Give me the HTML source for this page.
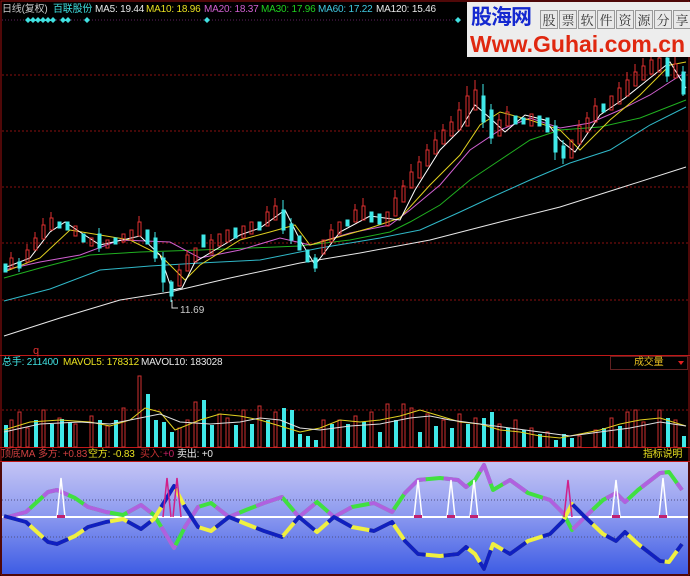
<!DOCTYPE html>
<html><head><meta charset="utf-8">
<style>
html,body{margin:0;padding:0;background:#000;}
body{width:690px;height:576px;overflow:hidden;position:relative;font-family:"Liberation Sans","Noto Sans CJK SC",sans-serif;}
.t{position:absolute;font-size:10px;white-space:nowrap;line-height:12px;letter-spacing:-0.2px;}
#wm{position:absolute;left:467px;top:2px;width:223px;height:55px;background:#ededed;}
#wm .a{position:absolute;left:4px;top:4px;font:bold 21px "Liberation Sans","Noto Sans CJK SC",sans-serif;color:#1428d0;letter-spacing:-1px;line-height:24px;}
#wm .b{position:absolute;left:73px;top:8px;display:flex;}
#wm .b span{display:block;width:16px;height:17px;border:1px solid #999;margin-right:1px;font:13px "Noto Serif CJK SC",serif;color:#333;text-align:center;line-height:17px;background:#e8e8e8;}
#wm .c{position:absolute;left:3px;top:30px;font:bold 23px "Liberation Sans",sans-serif;color:#e02810;line-height:24px;}
</style></head><body>
<svg width="690" height="576" style="position:absolute;left:0;top:0">
<defs><linearGradient id="g" x1="0" y1="0" x2="0" y2="1"><stop offset="0" stop-color="#c4c4f4"/><stop offset="0.45" stop-color="#8f9cf0"/><stop offset="1" stop-color="#3e5ce4"/></linearGradient></defs>
<rect x="1" y="1" width="688" height="574" fill="none" stroke="#a01010" stroke-width="1"/>
<g stroke="#8a1010" stroke-dasharray="2,2" stroke-width="1">
<line x1="2" y1="75" x2="688" y2="75"/><line x1="2" y1="131" x2="688" y2="131"/><line x1="2" y1="187" x2="688" y2="187"/><line x1="2" y1="243" x2="688" y2="243"/><line x1="2" y1="300" x2="688" y2="300"/>
<line x1="2" y1="410" x2="688" y2="410"/>
</g>
<line x1="2" y1="20" x2="460" y2="20" stroke="#602060" stroke-dasharray="1,2"/>
<line x1="0" y1="355.5" x2="690" y2="355.5" stroke="#c01818"/>
<line x1="0" y1="447.5" x2="690" y2="447.5" stroke="#c01818"/>
<line x1="0" y1="461.5" x2="690" y2="461.5" stroke="#c01818"/>
<g fill="#40e0e0">
<path d="M28 17l3 3-3 3-3-3z M33 17l3 3-3 3-3-3z M38 17l3 3-3 3-3-3z M43 17l3 3-3 3-3-3z M48 17l3 3-3 3-3-3z M53 17l3 3-3 3-3-3z M63 17l3 3-3 3-3-3z M68 17l3 3-3 3-3-3z M87 17l3 3-3 3-3-3z M207 17l3 3-3 3-3-3z M458 17l3 3-3 3-3-3z"/>
</g>
<polyline fill="none" stroke="#e8e8e8" stroke-width="1" points="4,336 60,318 120,300 170,292 230,278 300,263 360,253 430,240 500,222 560,207 620,188 686,167"/>
<polyline fill="none" stroke="#30b8c8" stroke-width="1" points="4,301 50,289 100,270 150,266 200,263 260,260 320,248 380,238 420,230 460,212 490,198 530,180 570,163 610,150 650,125 686,107"/>
<polyline fill="none" stroke="#20b020" stroke-width="1" points="4,278 40,268 90,255 140,252 200,250 250,248 300,246 350,240 390,232 410,222 440,205 470,180 500,160 530,140 560,130 600,127 640,118 686,100"/>
<polyline fill="none" stroke="#d060d0" stroke-width="1" points="4,270 40,262 80,255 120,240 170,242 200,258 240,250 280,238 310,245 350,233 390,225 410,210 440,185 470,150 500,130 530,118 560,128 590,123 620,110 650,95 670,82 686,72"/>
<polyline fill="none" stroke="#e0d020" stroke-width="1" points="4,272 40,258 70,230 100,235 130,240 160,255 185,280 200,265 240,240 270,232 295,225 310,245 335,238 370,228 400,218 430,185 460,155 480,125 500,112 530,120 560,130 580,150 610,120 640,95 670,65 686,62"/>
<polyline fill="none" stroke="#ffffff" stroke-width="1" points="4,268 30,258 50,232 65,222 80,232 100,245 140,236 160,255 172,290 182,288 195,262 215,250 240,235 260,228 285,210 300,240 315,265 340,232 370,216 400,220 415,190 440,150 460,130 475,105 490,118 505,132 525,115 545,120 560,140 575,152 600,115 625,98 645,82 660,70 670,62 686,88"/>
<g stroke-width="1">
<g stroke="#e03030" fill="none">
<rect x="10" y="258" width="3" height="10"/><rect x="26" y="250" width="3" height="12"/><rect x="34" y="238" width="3" height="12"/><rect x="42" y="225" width="3" height="14"/><rect x="50" y="218" width="3" height="12"/><rect x="74" y="226" width="3" height="10"/><rect x="90" y="238" width="3" height="8"/><rect x="106" y="240" width="3" height="8"/><rect x="122" y="234" width="3" height="8"/><rect x="130" y="230" width="3" height="10"/><rect x="138" y="222" width="3" height="14"/><rect x="178" y="270" width="3" height="16"/><rect x="186" y="255" width="3" height="16"/><rect x="194" y="248" width="3" height="14"/><rect x="210" y="240" width="3" height="14"/><rect x="218" y="234" width="3" height="12"/><rect x="226" y="230" width="3" height="12"/><rect x="242" y="226" width="3" height="12"/><rect x="250" y="222" width="3" height="12"/><rect x="266" y="212" width="3" height="14"/><rect x="274" y="206" width="3" height="14"/><rect x="322" y="240" width="3" height="14"/><rect x="330" y="230" width="3" height="12"/><rect x="338" y="222" width="3" height="12"/><rect x="354" y="210" width="3" height="12"/><rect x="362" y="206" width="3" height="14"/><rect x="386" y="212" width="3" height="14"/><rect x="394" y="198" width="3" height="18"/><rect x="402" y="186" width="3" height="16"/><rect x="410" y="172" width="3" height="16"/><rect x="418" y="162" width="3" height="16"/><rect x="426" y="150" width="3" height="16"/><rect x="434" y="140" width="3" height="14"/><rect x="442" y="130" width="3" height="14"/><rect x="450" y="122" width="3" height="14"/><rect x="458" y="110" width="3" height="20"/><rect x="466" y="96" width="3" height="30"/><rect x="474" y="90" width="3" height="20"/><rect x="498" y="120" width="3" height="16"/><rect x="506" y="112" width="3" height="14"/><rect x="530" y="114" width="3" height="12"/><rect x="570" y="140" width="3" height="18"/><rect x="578" y="126" width="3" height="18"/><rect x="586" y="118" width="3" height="14"/><rect x="594" y="106" width="3" height="16"/><rect x="610" y="96" width="3" height="14"/><rect x="618" y="88" width="3" height="16"/><rect x="626" y="80" width="3" height="16"/><rect x="634" y="72" width="3" height="14"/><rect x="642" y="66" width="3" height="14"/><rect x="650" y="60" width="3" height="14"/><rect x="658" y="58" width="3" height="14"/><rect x="674" y="64" width="3" height="14"/>
</g>
<g stroke="#40e8e8" fill="#40e8e8">
<rect x="4" y="264" width="3" height="8"/><rect x="18" y="262" width="3" height="6"/><rect x="58" y="222" width="3" height="6"/><rect x="66" y="222" width="3" height="8"/><rect x="82" y="234" width="3" height="8"/><rect x="98" y="234" width="3" height="14"/><rect x="114" y="238" width="3" height="6"/><rect x="146" y="230" width="3" height="14"/><rect x="154" y="238" width="3" height="20"/><rect x="162" y="258" width="3" height="24"/><rect x="170" y="282" width="3" height="14"/><rect x="202" y="235" width="3" height="12"/><rect x="234" y="228" width="3" height="10"/><rect x="258" y="222" width="3" height="8"/><rect x="282" y="210" width="3" height="20"/><rect x="290" y="224" width="3" height="16"/><rect x="298" y="236" width="3" height="14"/><rect x="306" y="250" width="3" height="12"/><rect x="314" y="258" width="3" height="10"/><rect x="346" y="220" width="3" height="6"/><rect x="370" y="212" width="3" height="10"/><rect x="378" y="214" width="3" height="10"/><rect x="482" y="96" width="3" height="26"/><rect x="490" y="110" width="3" height="28"/><rect x="514" y="116" width="3" height="8"/><rect x="522" y="118" width="3" height="6"/><rect x="538" y="116" width="3" height="10"/><rect x="546" y="118" width="3" height="14"/><rect x="554" y="126" width="3" height="26"/><rect x="562" y="146" width="3" height="12"/><rect x="602" y="104" width="3" height="8"/><rect x="666" y="58" width="3" height="18"/><rect x="682" y="72" width="3" height="22"/>
</g>
<g stroke="#e03030">
<path d="M11 252v6M27 244v6M35 232v6M43 218v7M51 212v6M139 216v6M179 264v6M187 250v5M211 234v6M267 206v6M275 198v8M331 224v6M355 204v6M363 198v8M395 190v8M403 180v6M411 164v8M419 156v6M427 144v6M435 132v8M443 124v6M451 116v6M459 102v8M467 86v10M475 80v10M499 114v6M507 106v6M579 120v6M587 112v6M595 98v8M619 82v6M627 72v8M635 64v8M643 58v8M651 52v8M659 48v10M675 56v8"/>
</g>
<g stroke="#40e8e8">
<path d="M99 228v24M155 232v30M163 252v40M171 280v22M283 200v34M291 218v26M483 84v44M491 104v40M555 120v40M563 140v24M667 48v34M683 66v30M315 254v18M19 258v14"/>
</g>
</g>
<path d="M172 300v8h6" stroke="#ddd" fill="none"/>
<text x="180" y="313" fill="#cccccc" font-size="10" font-family="Liberation Sans">11.69</text>
<text x="33" y="354" fill="#e03030" font-size="11" font-family="Liberation Sans">q</text>
<g fill="none" stroke="#d03030">
<rect x="10" y="420" width="3" height="27"/><rect x="18" y="412" width="3" height="35"/><rect x="26" y="428" width="3" height="19"/><rect x="42" y="410" width="3" height="37"/><rect x="58" y="418" width="3" height="29"/><rect x="74" y="424" width="3" height="23"/><rect x="90" y="416" width="3" height="31"/><rect x="106" y="426" width="3" height="21"/><rect x="122" y="408" width="3" height="39"/><rect x="138" y="376" width="3" height="71"/><rect x="178" y="428" width="3" height="19"/><rect x="186" y="420" width="3" height="27"/><rect x="194" y="402" width="3" height="45"/><rect x="218" y="414" width="3" height="33"/><rect x="226" y="418" width="3" height="29"/><rect x="242" y="410" width="3" height="37"/><rect x="258" y="406" width="3" height="41"/><rect x="274" y="412" width="3" height="35"/><rect x="322" y="420" width="3" height="27"/><rect x="338" y="420" width="3" height="27"/><rect x="354" y="416" width="3" height="31"/><rect x="370" y="412" width="3" height="35"/><rect x="386" y="404" width="3" height="43"/><rect x="402" y="404" width="3" height="43"/><rect x="410" y="408" width="3" height="39"/><rect x="426" y="414" width="3" height="33"/><rect x="442" y="420" width="3" height="27"/><rect x="458" y="414" width="3" height="33"/><rect x="474" y="418" width="3" height="29"/><rect x="498" y="424" width="3" height="23"/><rect x="514" y="420" width="3" height="27"/><rect x="530" y="428" width="3" height="19"/><rect x="546" y="432" width="3" height="15"/><rect x="578" y="436" width="3" height="11"/><rect x="594" y="430" width="3" height="17"/><rect x="610" y="418" width="3" height="29"/><rect x="626" y="412" width="3" height="35"/><rect x="634" y="410" width="3" height="37"/><rect x="642" y="422" width="3" height="25"/><rect x="658" y="410" width="3" height="37"/><rect x="674" y="420" width="3" height="27"/>
</g>
<g fill="#40e8e8">
<rect x="4" y="425" width="4" height="22"/><rect x="34" y="420" width="4" height="27"/><rect x="50" y="424" width="4" height="23"/><rect x="60" y="419" width="4" height="28"/><rect x="68" y="422" width="4" height="25"/><rect x="98" y="420" width="4" height="27"/><rect x="114" y="420" width="4" height="27"/><rect x="146" y="394" width="4" height="53"/><rect x="154" y="420" width="4" height="27"/><rect x="162" y="422" width="4" height="25"/><rect x="170" y="432" width="4" height="15"/><rect x="202" y="400" width="4" height="47"/><rect x="210" y="425" width="4" height="22"/><rect x="234" y="425" width="4" height="22"/><rect x="250" y="424" width="4" height="23"/><rect x="266" y="420" width="4" height="27"/><rect x="282" y="408" width="4" height="39"/><rect x="290" y="410" width="4" height="37"/><rect x="298" y="434" width="4" height="13"/><rect x="306" y="436" width="4" height="11"/><rect x="314" y="440" width="4" height="7"/><rect x="330" y="424" width="4" height="23"/><rect x="346" y="424" width="4" height="23"/><rect x="362" y="422" width="4" height="25"/><rect x="378" y="432" width="4" height="15"/><rect x="394" y="420" width="4" height="27"/><rect x="418" y="432" width="4" height="15"/><rect x="434" y="426" width="4" height="21"/><rect x="450" y="428" width="4" height="19"/><rect x="466" y="424" width="4" height="23"/><rect x="482" y="418" width="4" height="29"/><rect x="490" y="412" width="4" height="35"/><rect x="506" y="428" width="4" height="19"/><rect x="522" y="430" width="4" height="17"/><rect x="538" y="434" width="4" height="13"/><rect x="554" y="440" width="4" height="7"/><rect x="562" y="434" width="4" height="13"/><rect x="570" y="438" width="4" height="9"/><rect x="602" y="428" width="4" height="19"/><rect x="618" y="426" width="4" height="21"/><rect x="666" y="418" width="4" height="29"/><rect x="682" y="436" width="4" height="11"/>
</g>
<polyline fill="none" stroke="#e0d020" points="4,430 30,422 60,420 90,422 110,426 130,420 145,408 160,412 175,430 200,420 220,414 240,416 260,420 280,426 300,432 320,428 340,420 360,422 380,420 400,416 420,410 440,416 460,422 480,424 500,430 520,432 540,436 560,438 580,434 600,430 620,424 640,420 660,418 686,426"/>
<polyline fill="none" stroke="#e0e0e0" points="4,432 40,424 80,422 110,424 140,418 160,414 180,422 210,424 240,422 260,418 280,420 300,428 320,430 350,426 380,424 410,418 430,416 450,420 480,424 510,428 540,432 570,436 600,432 630,428 660,422 686,426"/>
<rect x="2" y="462" width="686" height="112" fill="url(#g)"/>
<line x1="2" y1="500" x2="688" y2="500" stroke="#505080" stroke-dasharray="1,2"/>
<line x1="2" y1="537" x2="688" y2="537" stroke="#505080" stroke-dasharray="1,2"/>
<line x1="2" y1="517" x2="688" y2="517" stroke="#ffffff" stroke-width="2"/>
<g fill="none" stroke-width="4" stroke-linejoin="round">
<polyline stroke="#40e040" points="4,518 26,512 48,492 57,490 75,498 88,507 106,512 123,515 141,505 154,515 174,548 185,527 198,507 211,503 229,517 246,510 264,503 282,497 299,517 317,502 334,517 352,507 374,503 392,512 405,493 418,480 440,478 458,480 466,487 475,480 484,465 493,490 510,480 528,493 550,500 563,513 572,530 585,517 603,500 616,493 625,502 638,490 660,473 669,472 682,490"/>
<polyline stroke="#b060e0" stroke-dasharray="28,18" points="4,518 26,512 48,492 57,490 75,498 88,507 106,512 123,515 141,505 154,515 174,548 185,527 198,507 211,503 229,517 246,510 264,503 282,497 299,517 317,502 334,517 352,507 374,503 392,512 405,493 418,480 440,478 458,480 466,487 475,480 484,465 493,490 510,480 528,493 550,500 563,513 572,530 585,517 603,500 616,493 625,502 638,490 660,473 669,472 682,490"/>
<polyline stroke="#f0f040" points="4,516 26,522 48,542 57,544 75,536 88,527 106,522 123,519 141,529 154,519 174,486 185,507 198,527 211,531 229,517 246,524 264,531 282,537 299,517 317,532 334,517 352,527 374,531 392,522 405,541 418,554 440,556 458,554 466,547 475,554 484,569 493,544 510,554 528,541 550,534 563,521 572,504 585,517 603,534 616,541 625,532 638,544 660,561 669,562 682,544"/>
<polyline stroke="#1020c0" stroke-dasharray="28,18" points="4,516 26,522 48,542 57,544 75,536 88,527 106,522 123,519 141,529 154,519 174,486 185,507 198,527 211,531 229,517 246,524 264,531 282,537 299,517 317,532 334,517 352,527 374,531 392,522 405,541 418,554 440,556 458,554 466,547 475,554 484,569 493,544 510,554 528,541 550,534 563,521 572,504 585,517 603,534 616,541 625,532 638,544 660,561 669,562 682,544"/>
</g>
<g fill="none" stroke="#ffffff" stroke-width="1.5">
<path d="M57 517L61 478L65 517M414 517L418 480L422 517M447 517L451 480L455 517M470 517L474 480L478 517M612 517L616 480L620 517M659 517L663 478L667 517"/>
</g>
<g fill="none" stroke="#d0208a" stroke-width="1.5">
<path d="M163 517L167 478L171 517M173 517L177 478L181 517M564 517L568 480L572 517"/>
</g>
<g fill="#c02070"><rect x="57" y="515" width="8" height="3"/><rect x="414" y="515" width="8" height="3"/><rect x="447" y="515" width="8" height="3"/><rect x="470" y="515" width="8" height="3"/><rect x="612" y="515" width="8" height="3"/><rect x="659" y="515" width="8" height="3"/></g>
<rect x="610.5" y="356.5" width="77" height="13" fill="#000" stroke="#602020"/>
<path d="M678 361h6l-3 4z" fill="#e02020"/>
</svg>
<div class="t" style="left:2px;top:4px;color:#c8c8c8">日线(复权)</div>
<div class="t" style="left:53px;top:4px;color:#40e0e0">百联股份</div>
<div class="t" style="left:95px;top:4px;color:#e8e8e8">MA5: 19.44</div>
<div class="t" style="left:146px;top:4px;color:#e8e020">MA10: 18.96</div>
<div class="t" style="left:204px;top:4px;color:#d060d0">MA20: 18.37</div>
<div class="t" style="left:261px;top:4px;color:#20d020">MA30: 17.96</div>
<div class="t" style="left:318px;top:4px;color:#40c8e0">MA60: 17.22</div>
<div class="t" style="left:376px;top:4px;color:#e8e8e8">MA120: 15.46</div>
<div class="t" style="left:2px;top:357px;color:#40e0e0">总手: 211400</div>
<div class="t" style="left:63px;top:357px;color:#e8e020">MAVOL5: 178312</div>
<div class="t" style="left:141px;top:357px;color:#e8e8e8">MAVOL10: 183028</div>
<div class="t" style="left:634px;top:357px;color:#e8c020">成交量</div>
<div class="t" style="left:1px;top:449px;color:#d04040">顶底MA</div>
<div class="t" style="left:38px;top:449px;color:#d04040">多方: +0.83</div>
<div class="t" style="left:88px;top:449px;color:#e8e020">空方: -0.83</div>
<div class="t" style="left:140px;top:449px;color:#c03030">买入:</div>
<div class="t" style="left:163px;top:449px;color:#c02060">+0</div>
<div class="t" style="left:177px;top:449px;color:#e8e8e8">卖出: +0</div>
<div class="t" style="left:643px;top:449px;color:#e8e020">指标说明</div>
<div id="wm"><div class="a">股海网</div><div class="b"><span>股</span><span>票</span><span>软</span><span>件</span><span>资</span><span>源</span><span>分</span><span>享</span></div><div class="c">Www.Guhai.com.cn</div></div>
</body></html>
